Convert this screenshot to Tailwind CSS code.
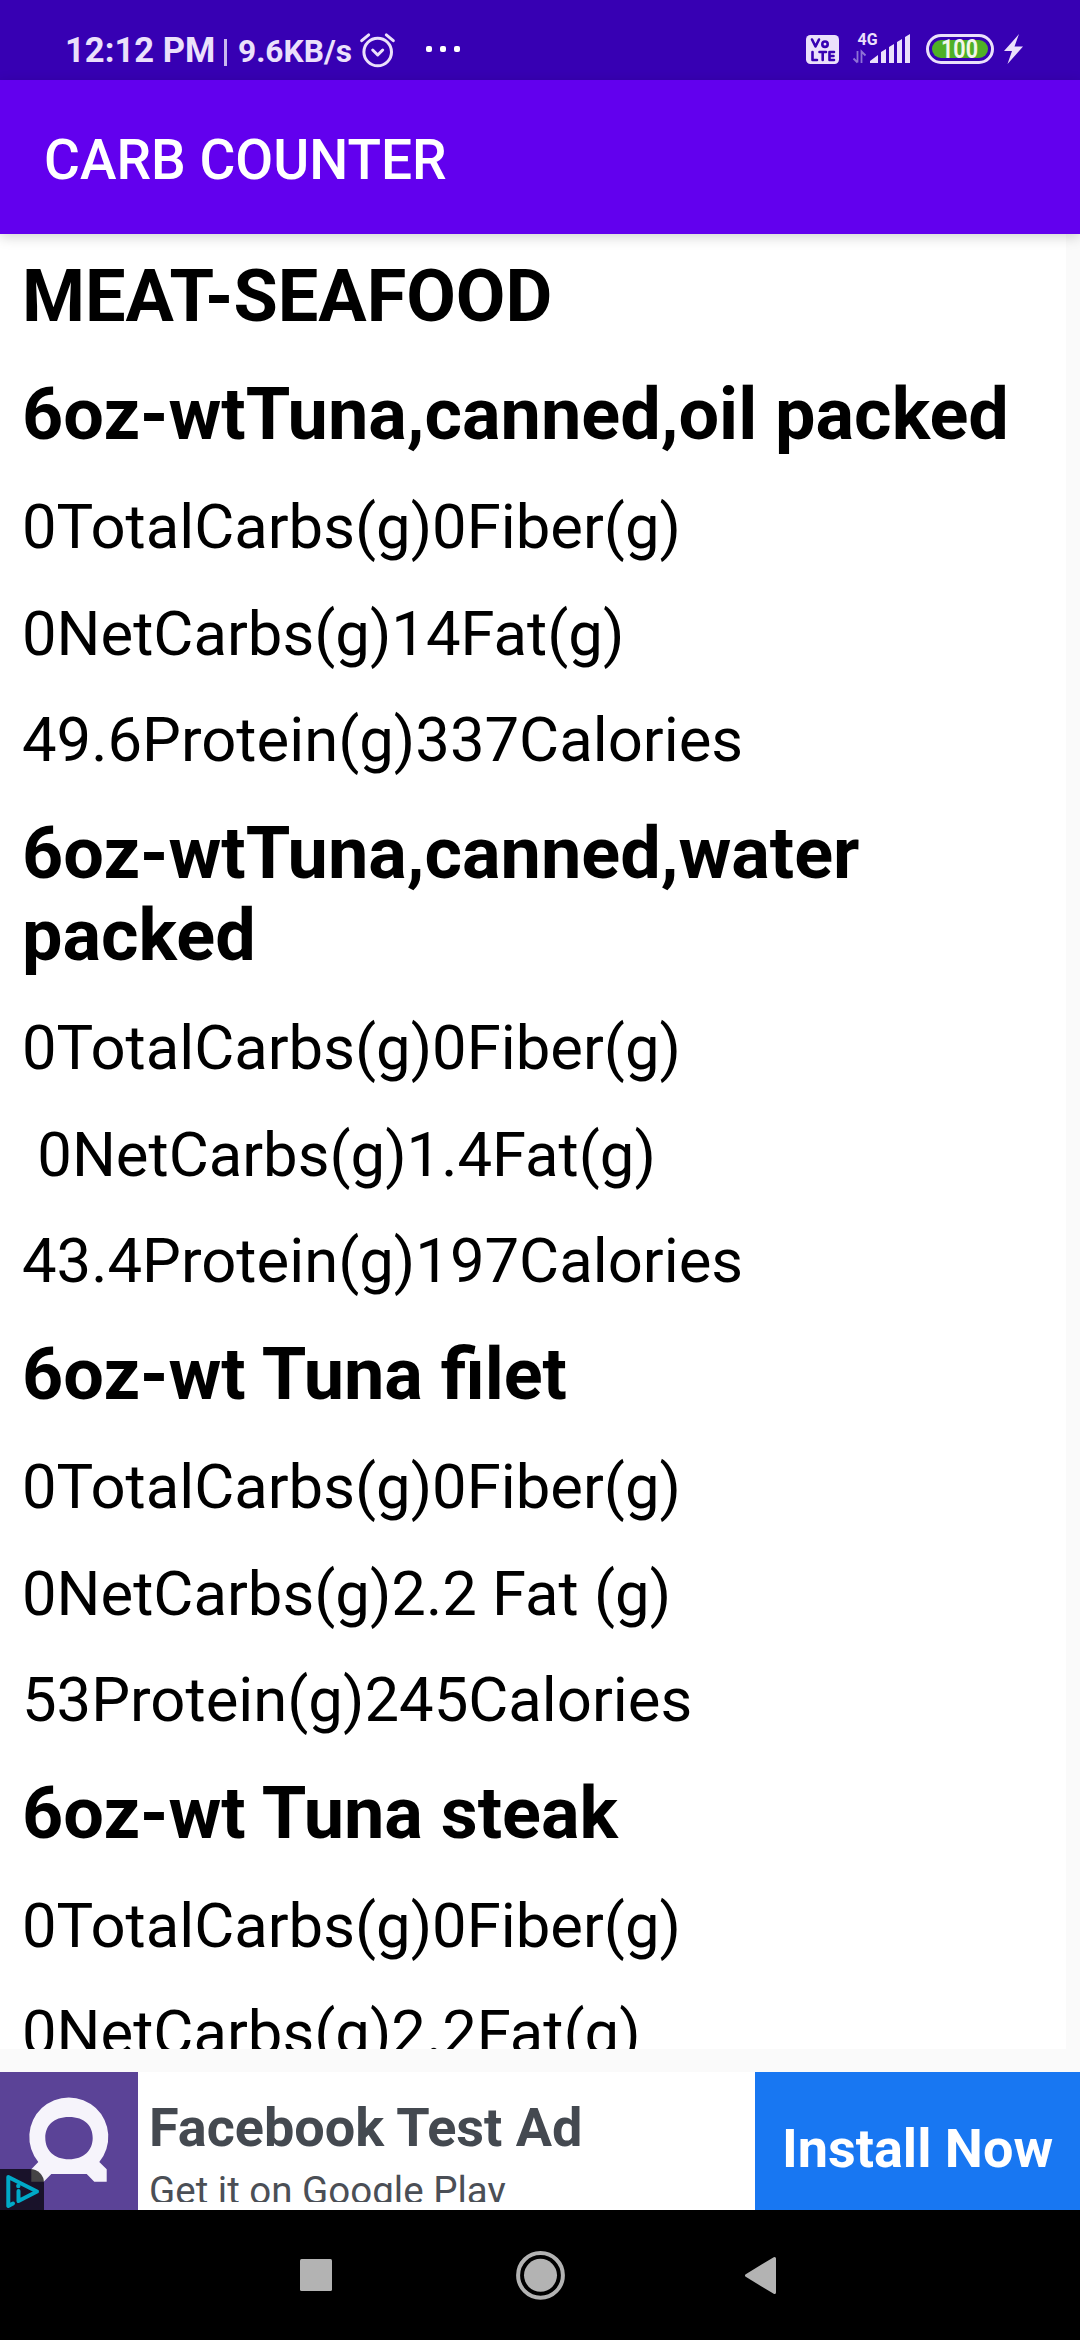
<!DOCTYPE html>
<html lang="en">
<head>
<meta charset="utf-8">
<title>Carb Counter</title>
<script src="https://cdn.jsdelivr.net/npm/@tailwindcss/browser@4"></script>
</head>
<body class="flex h-[2340px] w-[1080px] flex-col overflow-hidden bg-[#fafafa] font-['Roboto',sans-serif]">

<!-- Status bar -->
<header class="flex h-20 shrink-0 items-start justify-between bg-[#3700b3] pl-[65px] pr-[57px] font-bold text-[#ebe0fb]">
  <div class="flex h-20 items-start">
    <span class="mt-[30px] w-[159px] whitespace-nowrap text-[34.6px] leading-[41px]">12:12 PM</span>
    <span class="mt-[39px] h-[27px] w-[3px] bg-[#c9b8ee]"></span>
    <span class="ml-[11px] mt-[33px] w-[120px] whitespace-nowrap text-[31.7px] leading-[37px]">9.6KB/s</span>
    <svg class="mt-[32px] h-9 w-10" viewBox="0 0 40 36" fill="none" stroke="#ebe0fb" stroke-width="3" stroke-linecap="round" stroke-linejoin="round">
      <circle cx="19.7" cy="20" r="13.8"/><path d="M14.7 18l5 5 5-5M3.7 8.7l7-5.8M35.3 8.7l-7-5.8"/>
    </svg>
    <svg class="ml-[28px] mt-[46px] h-[6px] w-[35px]" viewBox="0 0 35 6" fill="#fff"><rect width="6" height="6" rx="2"/><rect x="14" width="6" height="6" rx="2"/><rect x="28" width="6" height="6" rx="2"/></svg>
  </div>
  <div class="flex h-20 items-start">
    <svg class="mt-[35px] h-[29px] w-[33px]" viewBox="0 0 33 29">
      <rect width="33" height="29" rx="4.5" fill="#ebe0fb"/>
      <g fill="none" stroke="#3700b3" stroke-width="2.6" stroke-linecap="round" stroke-linejoin="round"><path d="M6 4.5l3.500 7 3.500-7M6.500 17v8h4.500M13.500 17h6.500M16.700 17v8M28 17h-4.500v8H28M23.500 21h4"/><circle cx="19" cy="9.200" r="2.700"/></g>
    </svg>
    <svg class="ml-[13px] mt-[28px] h-10 w-[59px]" viewBox="0 0 59 40" fill="#ebe0fb">
      <text x="5.500" y="16.500" font-family="Roboto" font-weight="700" font-size="17" textLength="20" lengthAdjust="spacingAndGlyphs">4G</text>
      <g fill="none" stroke="#8f72d6" stroke-width="1.800"><path d="M5.500 23v11.500M1.500 30.500l4 4M9.500 35V23.500l4 4"/></g>
      <path d="M18 35v-2l8-6v8zM29 35V24l5-3v14zM37 35V19l5-3v19zM45 35V14l5-3v24zM53 35V9l5-3v29z"/>
    </svg>
    <svg class="ml-[15px] mt-[33px] h-8 w-[68px]" viewBox="0 0 68 32">
      <rect x="1.500" y="2.500" width="65" height="27" rx="13.500" fill="none" stroke="#ebe0fb" stroke-width="3"/>
      <rect x="6" y="7" width="56" height="18" rx="9" fill="#4fb026"/>
      <text x="15" y="25" font-family="Roboto" font-weight="700" font-size="25" textLength="37" lengthAdjust="spacingAndGlyphs" fill="#f1f6e9">100</text>
    </svg>
    <svg class="ml-[10px] mt-[34px] h-[30px] w-[19px]" viewBox="0 0 19 30" fill="#ebe0fb"><path d="M15 0L0 17h8L3.500 30 19 12.500h-8.500z"/></svg>
  </div>
</header>

<!-- App bar -->
<div class="z-10 flex h-[154px] shrink-0 items-center bg-[#6200ee] pl-[44px] pt-[6px] shadow-[0_3px_12px_rgba(0,0,0,0.18)]">
  <h1 class="text-[55px] font-medium leading-[64px] text-white">CARB COUNTER</h1>
</div>

<!-- Food list -->
<main class="h-[1815px] w-[1066px] shrink-0 overflow-hidden bg-white pl-[22px] pt-[22px] text-[61.6px] leading-[73px] text-black">
  <h2 class="text-[72px] font-bold leading-[82px]">MEAT-SEAFOOD</h2>
  <section class="mt-[36px]">
    <h3 class="mb-[35px] text-[72px] font-bold leading-[82px]">6oz-wtTuna,canned,oil packed</h3>
    <div class="flex flex-col gap-[33.500px]"><p>0TotalCarbs(g)0Fiber(g)</p><p>0NetCarbs(g)14Fat(g)</p><p>49.6Protein(g)337Calories</p></div>
  </section>
  <section class="mt-[36px]">
    <h3 class="mb-[35px] text-[72px] font-bold leading-[82px]">6oz-wtTuna,canned,water packed</h3>
    <div class="flex flex-col gap-[33.500px]"><p>0TotalCarbs(g)0Fiber(g)</p><p>&nbsp;0NetCarbs(g)1.4Fat(g)</p><p>43.4Protein(g)197Calories</p></div>
  </section>
  <section class="mt-[36px]">
    <h3 class="mb-[35px] text-[72px] font-bold leading-[82px]">6oz-wt Tuna filet</h3>
    <div class="flex flex-col gap-[33.500px]"><p>0TotalCarbs(g)0Fiber(g)</p><p>0NetCarbs(g)2.2 Fat (g)</p><p>53Protein(g)245Calories</p></div>
  </section>
  <section class="mt-[36px]">
    <h3 class="mb-[35px] text-[72px] font-bold leading-[82px]">6oz-wt Tuna steak</h3>
    <div class="flex flex-col gap-[33.500px]"><p>0TotalCarbs(g)0Fiber(g)</p><p>0NetCarbs(g)2.2Fat(g)</p></div>
  </section>
</main>

<!-- Banner ad -->
<aside class="mt-[23px] flex h-[138px] shrink-0 bg-white">
  <svg class="size-[138px] shrink-0" viewBox="0 0 138 138">
    <rect width="138" height="138" fill="#5b4397"/>
    <path fill="#f6f4fb" fill-rule="evenodd" d="M38.300 90A39.500 39.500 0 1 1 99.300 90L106.700 97.300V109.700H94.300L86.700 102H51.300L43.700 109.700H31.300V97.300ZM69 45C53 45 45.300 54 45.300 66S54 87.300 69 87.300 92.700 78 92.700 66 85 45 69 45Z"/>
    <path d="M0 97H30A14 14 0 0 1 44 111V138H0Z" fill="#000" fill-opacity=".72"/>
    <g fill="none" stroke="#00a9c8" stroke-width="4" stroke-linejoin="round" stroke-linecap="round"><path d="M13 131.500L8.300 134V105L37 119.500 18.500 129V119"/></g>
    <circle cx="18.300" cy="114" r="2.200" fill="#00a9c8"/>
  </svg>
  <div class="h-[130px] w-[617px] overflow-hidden pl-[11px] pt-[24px]">
    <p class="text-[54px] font-bold leading-[64px] text-[#444950]">Facebook Test Ad</p>
    <p class="mt-[8px] text-[38.500px] leading-[46px] text-[#4b4f56]">Get it on Google Play</p>
  </div>
  <div class="flex w-[325px] items-center justify-center bg-[#1877f2] pt-[15px] text-[54px] font-bold text-white">Install Now</div>
</aside>

<!-- Navigation bar -->
<nav class="flex h-[130px] shrink-0 items-center bg-black pl-[300px]">
  <svg class="h-[50px] w-[476px]" viewBox="0 0 476 50" fill="#b3b3b3">
    <rect y="9" width="32" height="32" rx="1.500"/>
    <circle cx="240.500" cy="25.300" r="16.500"/><circle cx="240.500" cy="25.300" r="22.400" fill="none" stroke="#b3b3b3" stroke-width="4"/>
    <path d="M446.500 25.500L474.500 8.500V42.500Z" stroke="#b3b3b3" stroke-width="3" stroke-linejoin="round"/>
  </svg>
</nav>
</body>
</html>
